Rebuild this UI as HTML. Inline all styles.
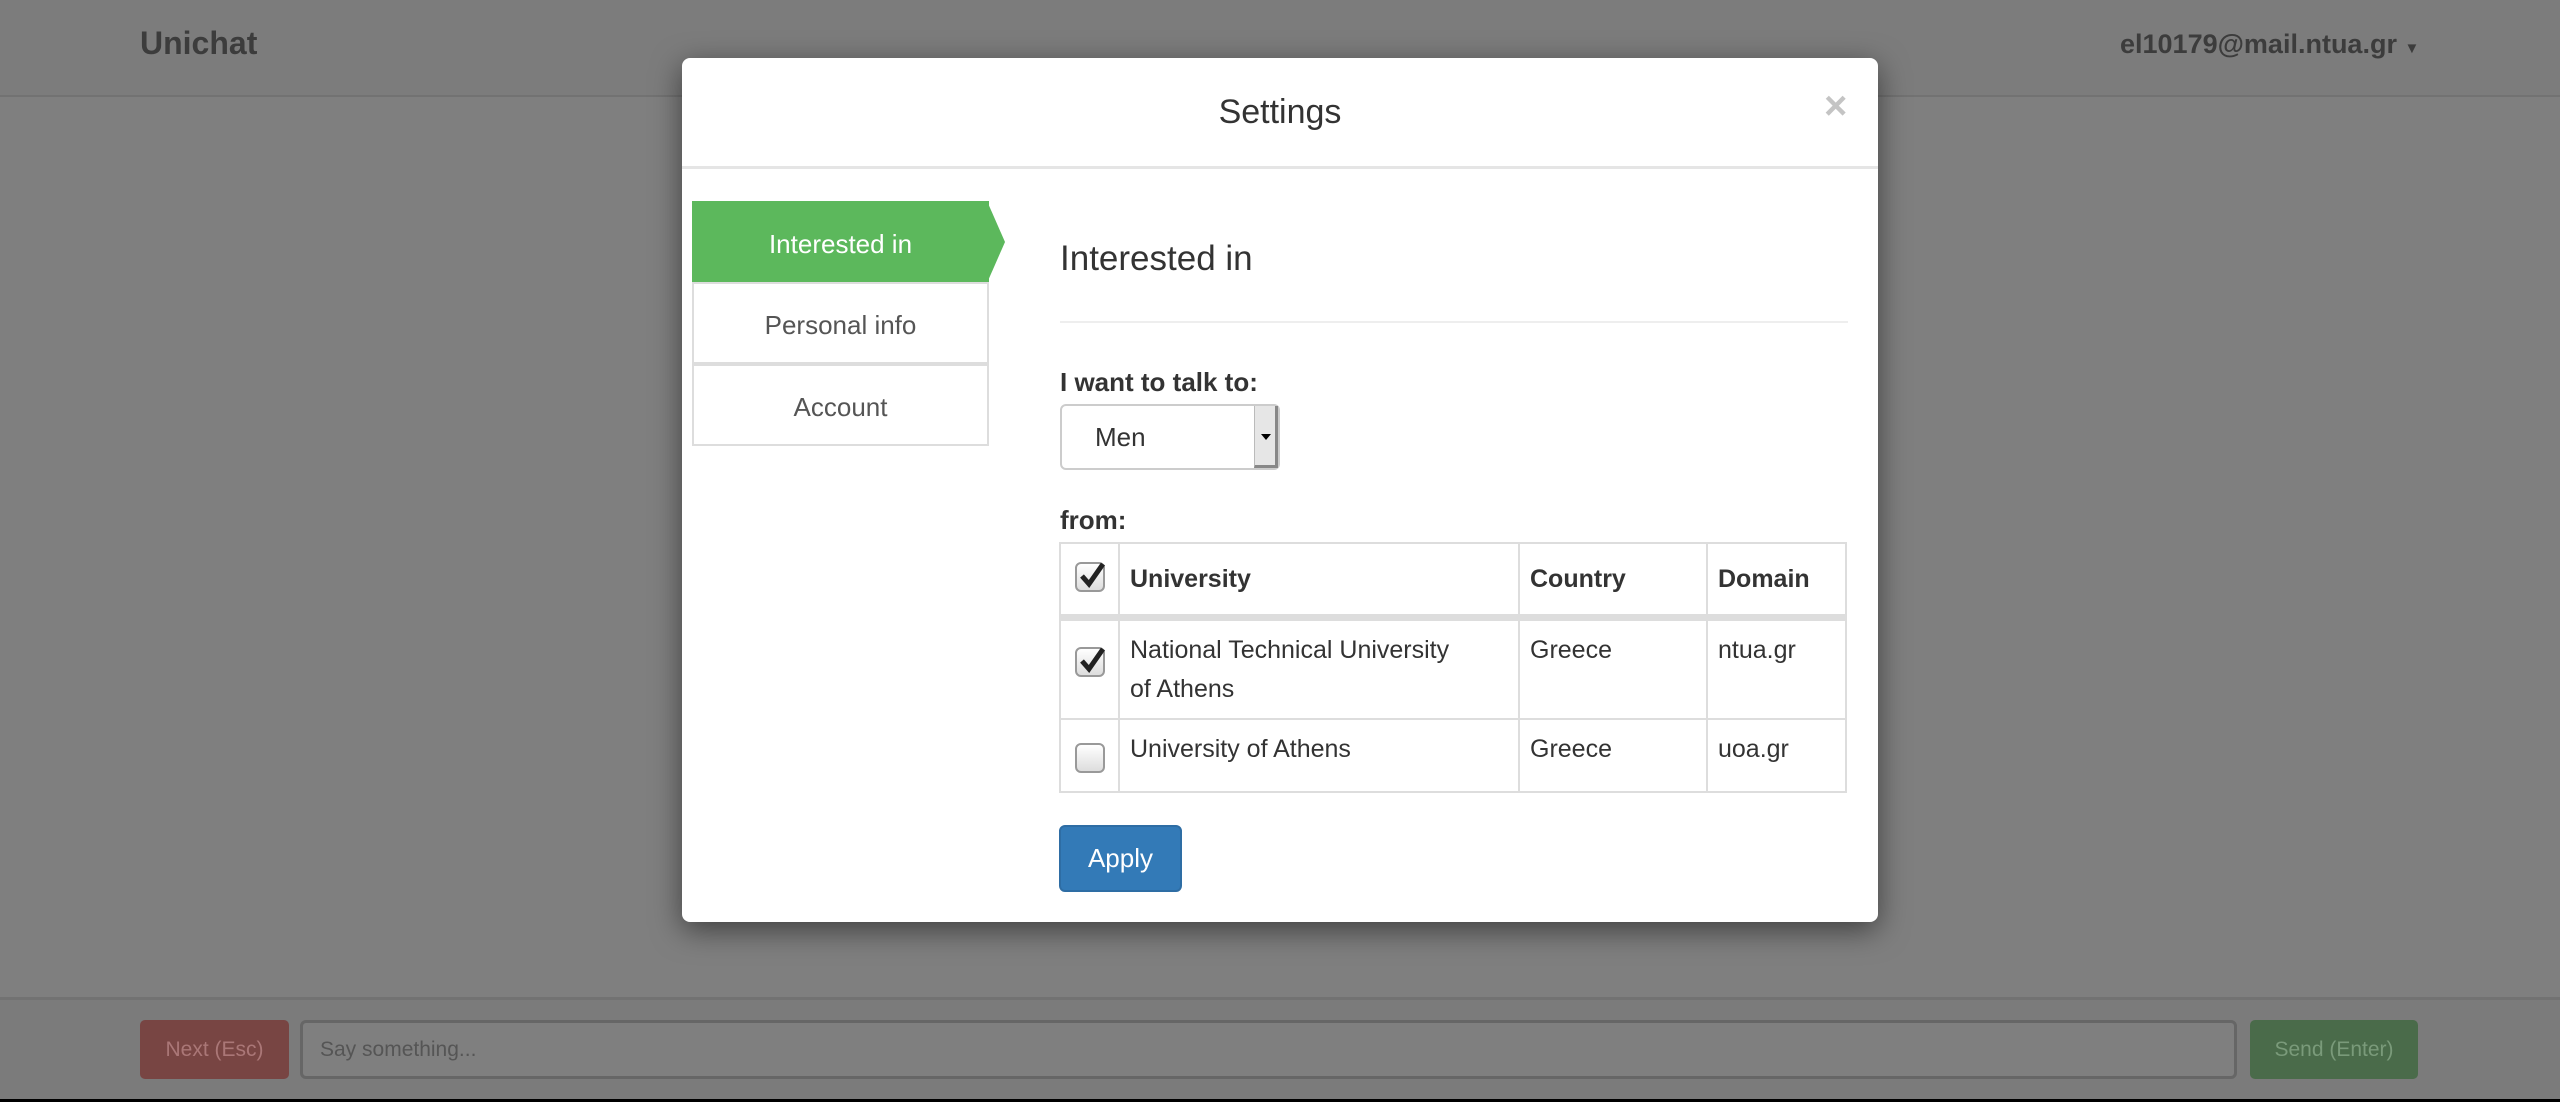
<!DOCTYPE html>
<html><head><meta charset="utf-8"><style>
*{box-sizing:border-box;margin:0;padding:0}
body{width:2560px;height:1102px;position:relative;overflow:hidden;background:#7f7f7f;font-family:"Liberation Sans",sans-serif;color:#333}
.a{position:absolute}
.nav{left:0;top:0;width:2560px;height:97px;background:#7c7c7c;border-bottom:2px solid #727272}
.foot{left:0;top:997px;width:2560px;height:102px;background:#7b7b7b;border-top:3px solid #727272}
.black{left:0;top:1099px;width:2560px;height:3px;background:#000}
.modal{left:682px;top:58px;width:1196px;height:864px;background:#fff;border-radius:8px;box-shadow:0 8px 30px rgba(0,0,0,.5)}
.tab{left:10px;width:297px;height:82px;text-align:center;line-height:82px;font-size:26px;color:#555;border:2px solid #ddd;background:#fff}
td,th{border:2px solid #ddd;font-size:25px;vertical-align:top;text-align:left;padding:18px 10px 0 10px;line-height:39px}
th{font-weight:bold;color:#333;padding-top:16px}
table{border-collapse:collapse;position:absolute;left:377px;top:484px;width:788px}
.cb{width:30px;height:30px;border:2px solid #999;border-radius:6px;background:linear-gradient(#fff,#ddd);position:relative;margin:2px 0 0 4px}
.cb svg{position:absolute;left:0;top:-4px}
</style></head><body>
<div class="a nav"></div>
<div class="a" style="left:140px;top:25px;font-size:32px;font-weight:bold;color:#3c3c3c">Unichat</div>
<div class="a" style="left:2120px;top:29px;font-size:27px;font-weight:bold;color:#3c3c3c;white-space:nowrap">el10179@mail.ntua.gr <span style="font-size:15px">▼</span></div>
<div class="a foot"></div>
<div class="a" style="left:140px;top:1020px;width:149px;height:59px;background:#784543;border-radius:5px;color:#a77;font-size:21px;line-height:59px;text-align:center">Next (Esc)</div>
<div class="a" style="left:300px;top:1020px;width:1937px;height:59px;border:3px solid #666;border-radius:6px;background:#7f7f7f;color:#555;font-size:21px;line-height:53px;padding-left:17px">Say something...</div>
<div class="a" style="left:2250px;top:1020px;width:168px;height:59px;background:#4a6b4a;border-radius:5px;color:#7a9a7a;font-size:21px;line-height:59px;text-align:center">Send (Enter)</div>
<div class="a black"></div>

<div class="a modal">
 <div class="a" style="left:0;top:0;width:1196px;height:111px;border-bottom:3px solid #e5e5e5;text-align:center;line-height:108px;font-size:34px;color:#333">Settings</div>
 <div class="a" style="left:1142px;top:26px;font-size:40px;color:#c4c4c4;font-weight:bold">×</div>
 <div class="a tab" style="top:143px;background:#5cb85c;border-color:#5cb85c;color:#fff">Interested in</div>
 <div class="a" style="left:305px;top:143px;width:0;height:0;border-top:41px solid transparent;border-bottom:41px solid transparent;border-left:18px solid #5cb85c"></div>
 <div class="a tab" style="top:224px">Personal info</div>
 <div class="a tab" style="top:306px">Account</div>
 <div class="a" style="left:378px;top:181px;font-size:35px;color:#333">Interested in</div>
 <div class="a" style="left:378px;top:263px;width:788px;height:2px;background:#eee"></div>
 <div class="a" style="left:378px;top:309px;font-size:26px;font-weight:bold">I want to talk to:</div>
 <div class="a" style="left:378px;top:346px;width:220px;height:66px;border:2px solid #ccc;border-radius:6px;font-size:26px;line-height:62px;padding-left:33px">Men
  <div class="a" style="right:0;top:0;width:24px;height:62px;background:#e6e6e6;border-left:1px solid #bbb;border-right:3px solid #888;border-bottom:3px solid #888"><div class="a" style="left:6px;top:28px;border-left:5px solid transparent;border-right:5px solid transparent;border-top:6px solid #000"></div></div>
 </div>
 <div class="a" style="left:378px;top:447px;font-size:26px;font-weight:bold">from:</div>
 <table>
  <tr style="height:74px;border-bottom:7px solid #ddd"><th style="width:59px"><div class="cb"><svg width="30" height="32"><path d="M5 16 L12 24 L26 4" stroke="#222" stroke-width="5" fill="none"/></svg></div></th><th style="width:400px">University</th><th style="width:188px">Country</th><th>Domain</th></tr>
  <tr style="height:102px"><td><div class="cb" style="margin-top:8px"><svg width="30" height="32"><path d="M5 16 L12 24 L26 4" stroke="#222" stroke-width="5" fill="none"/></svg></div></td><td style="padding-top:10px;white-space:nowrap">National Technical University<br>of Athens</td><td style="padding-top:10px">Greece</td><td style="padding-top:10px">ntua.gr</td></tr>
  <tr style="height:73px"><td><div class="cb" style="margin-top:5px"></div></td><td style="padding-top:10px">University of Athens</td><td style="padding-top:10px">Greece</td><td style="padding-top:10px">uoa.gr</td></tr>
 </table>
 <div class="a" style="left:377px;top:767px;width:123px;height:67px;background:#337ab7;border:2px solid #2e6da4;border-radius:6px;color:#fff;font-size:26px;line-height:63px;text-align:center">Apply</div>
</div>
</body></html>
